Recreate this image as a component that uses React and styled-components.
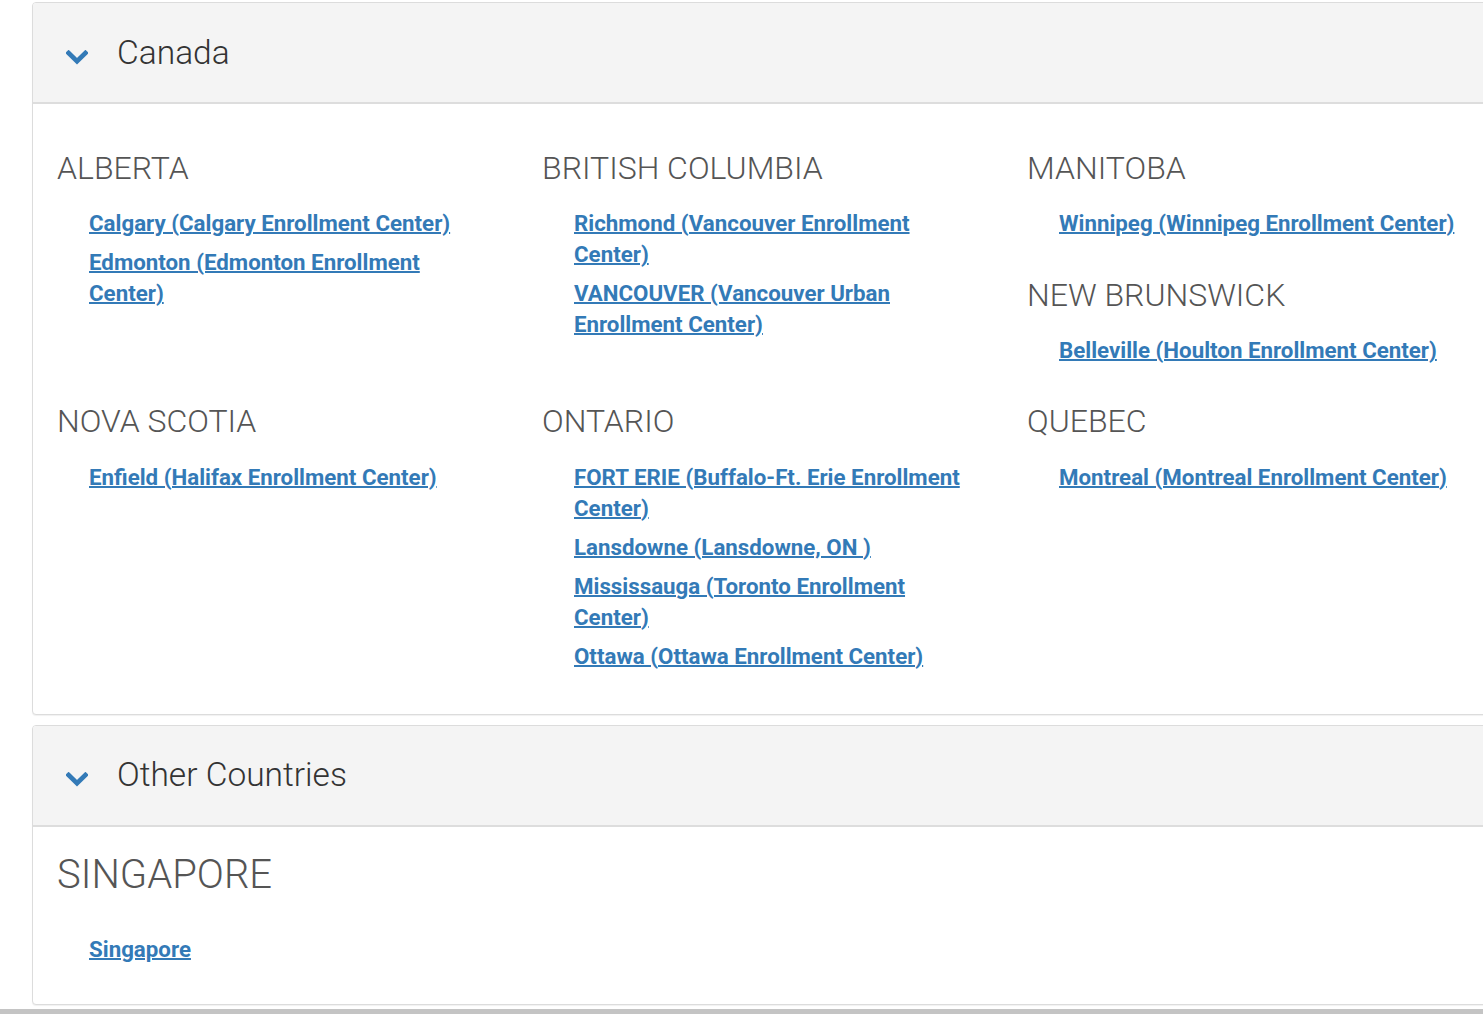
import React from "react";
import styled, { createGlobalStyle } from "styled-components";

const GlobalStyle = createGlobalStyle`
  body {
    margin: 0;
    background: #fff;
    overflow: hidden;
    font-family: Roboto, "Liberation Sans", Arial, sans-serif;
  }
`;

const canada = [
  [
    {
      name: "ALBERTA",
      links: [
        "Calgary (Calgary Enrollment Center)",
        "Edmonton (Edmonton Enrollment Center)",
      ],
    },
  ],
  [
    {
      name: "BRITISH COLUMBIA",
      links: [
        "Richmond (Vancouver Enrollment Center)",
        "VANCOUVER (Vancouver Urban Enrollment Center)",
      ],
    },
  ],
  [
    { name: "MANITOBA", links: ["Winnipeg (Winnipeg Enrollment Center)"] },
    { name: "NEW BRUNSWICK", links: ["Belleville (Houlton Enrollment Center)"] },
  ],
  [{ name: "NOVA SCOTIA", links: ["Enfield (Halifax Enrollment Center)"] }],
  [
    {
      name: "ONTARIO",
      links: [
        "FORT ERIE (Buffalo-Ft. Erie Enrollment Center)",
        "Lansdowne (Lansdowne, ON )",
        "Mississauga (Toronto Enrollment Center)",
        "Ottawa (Ottawa Enrollment Center)",
      ],
    },
  ],
  [{ name: "QUEBEC", links: ["Montreal (Montreal Enrollment Center)"] }],
];

const Chevron = () => (
  <svg width="22" height="15" viewBox="0 0 22 15">
    <polyline
      points="2.6,3 11,11.2 19.4,3"
      fill="none"
      stroke="#337ab7"
      strokeWidth="4.6"
      strokeLinecap="square"
    />
  </svg>
);

const App = () => {
  return (
    <Page>
      <GlobalStyle />
      <Card>
        <Header>
          <Chevron />
          <Title>Canada</Title>
        </Header>
        <Body>
          <ProvinceGrid>
            {canada.map((cell, i) => (
              <Cell key={i}>
                {cell.map((p) => (
                  <Province key={p.name}>
                    <ProvinceName>{p.name}</ProvinceName>
                    <LinkList>
                      {p.links.map((l) => (
                        <LinkItem key={l}>
                          <Link href="#">{l}</Link>
                        </LinkItem>
                      ))}
                    </LinkList>
                  </Province>
                ))}
              </Cell>
            ))}
          </ProvinceGrid>
        </Body>
      </Card>
      <Card>
        <Header>
          <Chevron />
          <Title>Other Countries</Title>
        </Header>
        <Body $compact>
          <CountryName>SINGAPORE</CountryName>
          <LinkList $gap={37}>
            <LinkItem>
              <Link href="#">Singapore</Link>
            </LinkItem>
          </LinkList>
        </Body>
      </Card>
      <BottomBar />
    </Page>
  );
};

export default App;

const Page = styled.div`
  padding: 2px 0 0 32px;
  display: flex;
  flex-direction: column;
  gap: 10px;
  width: 1500px;
`;

const Card = styled.div`
  background: #fff;
  border: 1px solid #dcdcdc;
  border-radius: 4px;
  box-shadow: 0 1px 1px rgba(0, 0, 0, 0.06);
  overflow: hidden;
`;

const Header = styled.div`
  height: 99px;
  display: flex;
  align-items: center;
  gap: 29px;
  padding-left: 33px;
  background: #f4f4f4;
  border-bottom: 2px solid #dddddd;

  svg {
    flex: none;
    margin-top: 9px;
  }
`;

const Title = styled.h2`
  margin: 0;
  font-family: Roboto, "Liberation Sans", sans-serif;
  font-weight: 300;
  font-size: 33.5px;
  color: #333;
  line-height: 1;
`;

const Body = styled.div`
  padding: ${(p) => (p.$compact ? "26px 24px 39px" : "47px 24px 42px")};
`;

const ProvinceGrid = styled.div`
  display: grid;
  grid-template-columns: repeat(3, 485px);
  row-gap: 38px;
`;

const Cell = styled.div`
  display: flex;
  flex-direction: column;
  gap: 39px;
`;

const Province = styled.div``;

const ProvinceName = styled.h3`
  margin: 0;
  font-family: Roboto, "Liberation Sans", sans-serif;
  font-weight: 300;
  font-size: 32px;
  line-height: 1.1;
  color: #555;
`;

const CountryName = styled.h3`
  margin: 0;
  font-family: Roboto, "Liberation Sans", sans-serif;
  font-weight: 300;
  font-size: 40px;
  line-height: 1.1;
  color: #555;
`;

const LinkList = styled.ul`
  list-style: none;
  margin: ${(p) => p.$gap || 22}px 0 0;
  padding: 0 0 0 32px;
  max-width: 405px;
  display: flex;
  flex-direction: column;
  gap: 8px;
`;

const LinkItem = styled.li`
  font-family: Roboto, "Liberation Sans", sans-serif;
  font-weight: 700;
  font-size: 22.3px;
  line-height: 31px;
`;

const Link = styled.a`
  color: #337ab7;
  text-decoration: underline;
  text-decoration-thickness: 2px;
`;

const BottomBar = styled.div`
  height: 5px;
  margin: -6px 0 0 -32px;
  background: #c4c4c4;
`;
